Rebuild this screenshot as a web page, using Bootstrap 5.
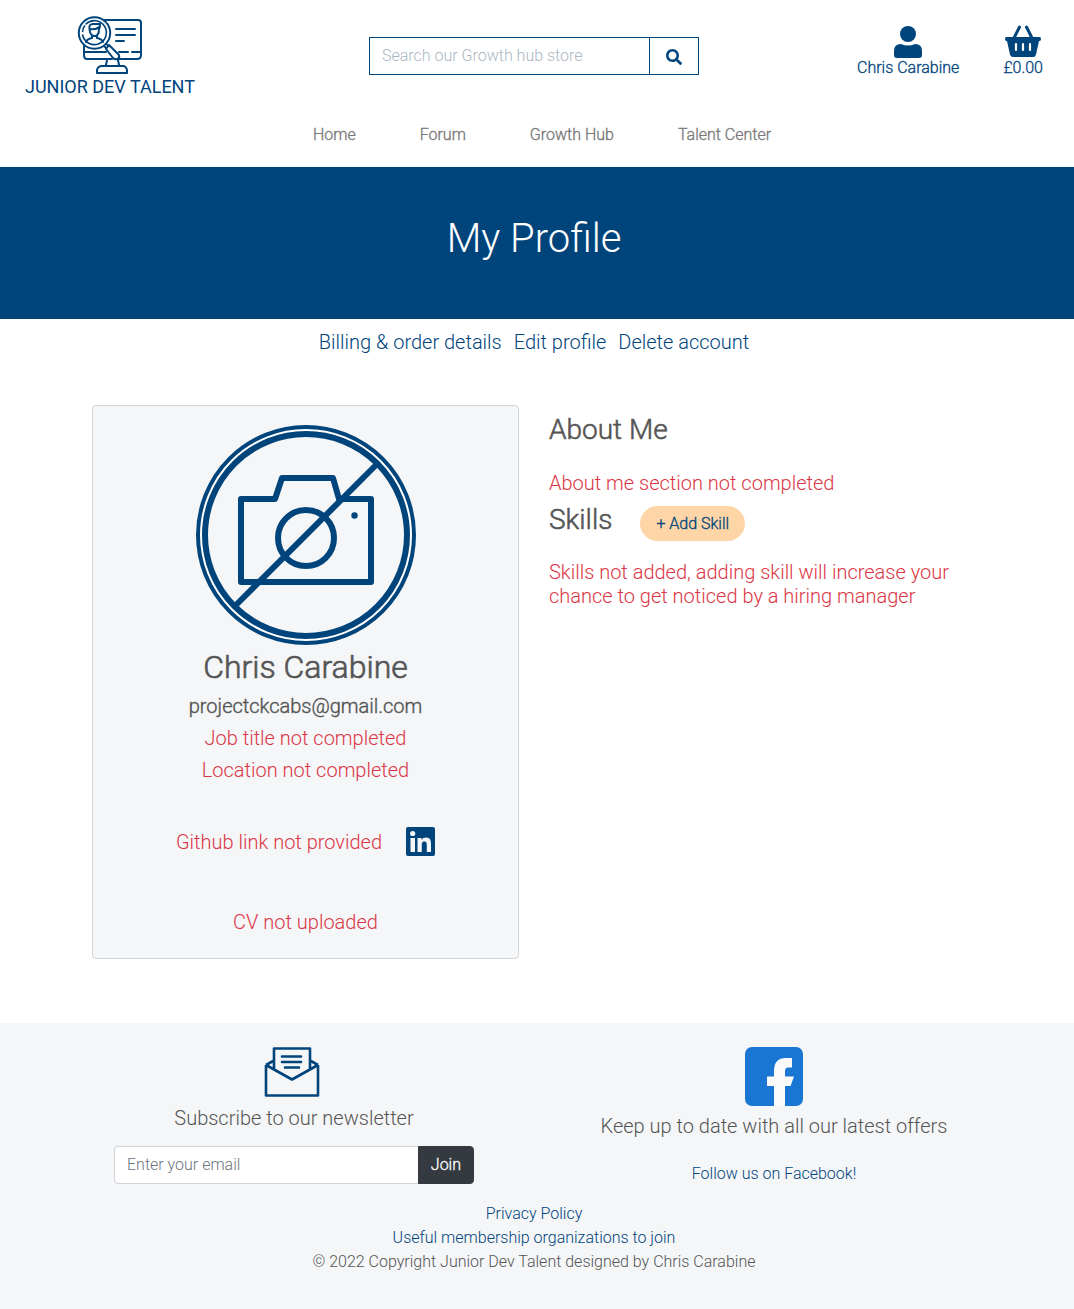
<!DOCTYPE html>
<html lang="en">
<head>
<meta charset="utf-8">
<meta name="viewport" content="width=device-width, initial-scale=1">
<title>My Profile | Junior Dev Talent</title>
<link href="https://cdn.jsdelivr.net/npm/bootstrap@5.3.0/dist/css/bootstrap.min.css" rel="stylesheet">
<style>
:root { --brand: #00447c; --soft: #f4f6f8; --ink: #555; --warn: #dc3545; }
body { font-family: Roboto, "Liberation Sans", sans-serif; font-weight: 300; color: var(--ink); }
a { color: var(--brand); text-decoration: none; }
h1, h2, h3, h4, h5 { font-weight: 300; }
.thick { -webkit-text-stroke: .02em currentColor; font-weight: 300; }
.page-edge { padding-right: 6px; }
.brand-text { font-size: 18px; line-height: 24px; padding-left: 25px; font-weight: 400; }
.site-head { padding-top: 15px; }
.search-box { max-width: 330px; margin-top: 22px; }
.search-box .form-control, .search-box .btn { border: 1px solid var(--brand); border-radius: 0; font-weight: 300; color: var(--brand); }
.search-box .btn { width: 50px; padding: 0; }
.search-box .form-control::placeholder { color: #aab7c4; }
.tool-link { line-height: 20px; }
.tool-link svg { display: block; margin: 0 auto; }
.tools { gap: 44px; padding: 10px 25px 0 0; }
.main-nav { gap: 64px; padding: 24px 0 20px 16px; }
.main-nav a { color: #777; }
.banner { background: var(--brand); color: #fff; }
.banner h1 { font-size: 40px; }
.sub-links { font-size: 20px; line-height: 24px; gap: 12px; padding-top: 11px; }
.profile-wrap { max-width: 914px; margin-top: 51px; }
.profile-wrap .row { --bs-gutter-x: 30px; }
.profile-card { background: var(--soft); padding: 19px 20px 24px; border-color: #d3d6d9; border-radius: 4px; }
.profile-card h2 { font-size: 32px; line-height: 38px; margin: 3px 0 8px; }
.note { font-size: 20px; line-height: 24px; margin-bottom: 8px; color: var(--warn); }
.mail-text { color: var(--ink); }
.section-title { font-size: 28px; line-height: 34px; margin: 0; }
.socials { gap: 24px; margin: 37px 0 54px; }
.skills-note { margin-top: 19px; }
.add-skill { background: #fed5a6; color: var(--brand); border-radius: 18px; padding: 6px 16px 5px; border: 0; margin: 3px 0 0 28px; }
.add-skill:hover { background: #fdc68a; color: var(--brand); }
.site-foot { background: var(--soft); margin-top: 64px; padding-top: 24px; padding-bottom: 36px; }
.foot-wrap { max-width: 960px; }
.foot-title { font-size: 20px; line-height: 24px; }
.join-box { max-width: 360px; }
.join-box .form-control { border-color: #ced4da; border-radius: 4px; font-weight: 300; }
.join-box .form-control::placeholder { color: #6c757d; }
.join-box .btn { background: #343a40; border-color: #343a40; border-radius: 4px; color: #fff; }
</style>
</head>
<body>
<header class="site-head page-edge">
  <div class="d-flex align-items-start">
    <div class="flex-fill w-25 d-flex">
      <a href="#" class="brand-text text-center">
        <svg class="d-block mx-auto" width="66" height="60" viewBox="0 0 66 60" fill="none" stroke="#00447c" stroke-width="2" stroke-linecap="round" stroke-linejoin="round">
          <path d="M27 5H61Q64 5 64 8V40Q64 44 60 44H41M35 44H10Q7 44 7 40V31M8 37H29M42 37H51M55 37H63M39 14H58M39 20H58M39 26H47M30 45L29 50M41 45L42 50M20 58V55Q21 51 25 51H46Q49 51 50 55V58Z"/>
          <circle cx="17.500" cy="18" r="15.700"/>
          <path stroke-width="1.600" d="M9 9A12 12 0 1 1 5.600 20M5.600 16.500Q6 13 7.500 11"/>
          <path d="M12.500 14Q11.500 9 16 9H23Q23 13 22 14Q22 21 17.500 21Q13 21 12.500 14ZM12.500 14Q19 15 22 12M15 21V23Q10 24 9 27M20 21V23Q25 24 26 27"/>
          <path d="M29 34L32 30L42 40Q43 43 40 44Q38 45 36 43ZM29 29L32 31M27 31L29 33"/>
        </svg>
        JUNIOR DEV TALENT
      </a>
    </div>
    <form class="search-box input-group flex-nowrap" role="search">
      <input type="search" class="form-control" placeholder="Search our Growth hub store" aria-label="Search our Growth hub store">
      <button type="button" class="btn" aria-label="Search">
        <svg width="16" height="16" viewBox="0 0 512 512" fill="currentColor"><path d="M505 443 405 343c-4-4-11-7-17-7h-16c27-35 44-79 44-128C416 93 323 0 208 0S0 93 0 208s93 208 208 208c49 0 93-17 128-44v16c0 6 3 13 7 17l100 100c9 9 24 9 34 0l28-28c9-10 9-25 0-34zM208 336c-71 0-128-57-128-128S137 80 208 80s128 57 128 128-57 128-128 128z"/></svg>
      </button>
    </form>
    <div class="tools flex-fill w-25 d-flex justify-content-end">
      <a href="#" class="tool-link thick text-center">
        <svg width="28" height="33" viewBox="0 0 28 33" fill="currentColor"><circle cx="14" cy="9" r="8"/><path d="M7 19Q14 22 21 19Q28 19 28 26V30Q28 33 25 33H3Q0 33 0 30V26Q0 19 7 19Z"/></svg>
        Chris Carabine
      </a>
      <a href="#" class="tool-link thick text-center">
        <svg width="36" height="33" viewBox="0 0 36 33" fill="currentColor"><path d="M1.500 12H34.500Q36 12 36 14T34.500 16H34L31 29.500Q30.500 32 28 32H8Q5.500 32 5 29.500L2 16H1.500Q0 16 0 14T1.500 12Z"/><path d="M9 13 14.500 2M27 13 21.500 2" stroke="currentColor" stroke-width="3" stroke-linecap="round"/><path d="M11 19V25M18 19V25M25 19V25" stroke="#fff" stroke-width="2.200" stroke-linecap="round"/></svg>
        £0.00
      </a>
    </div>
  </div>
  <nav class="main-nav thick d-flex justify-content-center" aria-label="Main">
    <a href="#">Home</a><a href="#">Forum</a><a href="#">Growth Hub</a><a href="#">Talent Center</a>
  </nav>
</header>
<section class="banner page-edge py-5 text-center"><h1>My Profile</h1></section>
<main class="page-edge">
  <div class="sub-links d-flex justify-content-center">
    <a href="#">Billing &amp; order details</a><a href="#">Edit profile</a><a href="#">Delete account</a>
  </div>
  <div class="profile-wrap mx-auto">
    <div class="row mx-0">
      <div class="col-md-6">
        <div class="card profile-card text-center">
          <svg class="mx-auto" width="220" height="220" viewBox="0 0 220 220" fill="none" stroke="#00447c" stroke-width="6" stroke-linejoin="round" role="img" aria-label="No profile photo">
            <circle cx="110" cy="110" r="106" stroke="#fff" stroke-width="4"/>
            <circle cx="110" cy="110" r="108" stroke-width="4"/><circle cx="110" cy="110" r="101"/>
            <path d="M45 74H79L86 53H137L143 74H175V157H45Z"/><circle cx="110" cy="113" r="28"/>
            <path d="M39 181 181 39"/><circle cx="158.500" cy="90.500" r="3.200" fill="#00447c" stroke="none"/>
          </svg>
          <h2 class="thick">Chris Carabine</h2>
          <p class="note mail-text thick">projectckcabs@gmail.com</p>
          <p class="note">Job title not completed</p>
          <p class="note">Location not completed</p>
          <div class="socials d-flex justify-content-center align-items-center">
            <p class="note mb-0">Github link not provided</p>
            <a href="#" aria-label="LinkedIn">
              <svg class="d-block" width="29" height="29" viewBox="0 0 29 29"><rect width="29" height="29" rx="2" fill="#00447c"/><g fill="#f4f6f8"><circle cx="6.700" cy="6.500" r="2.600"/><path d="M4.500 11H9V25H4.500ZM11.500 11H15.500V13Q17 10.600 20 10.600C24.500 10.600 25 14 25 17.300V25H20.800V18.200C20.800 16.500 20.700 14.400 18.300 14.400S15.800 16.300 15.800 18V25H11.500Z"/></g></svg>
            </a>
          </div>
          <p class="note mb-0">CV not uploaded</p>
        </div>
      </div>
      <div class="col-md-6 pt-2">
        <h3 class="section-title thick">About Me</h3>
        <p class="note mt-4">About me section not completed</p>
        <div class="d-flex align-items-start">
          <h3 class="section-title thick">Skills</h3>
          <button type="button" class="btn add-skill thick">+ Add Skill</button>
        </div>
        <p class="note skills-note">Skills not added, adding skill will increase your chance to get noticed by a hiring manager</p>
      </div>
    </div>
  </div>
</main>
<footer class="site-foot page-edge text-center">
  <div class="foot-wrap mx-auto">
    <div class="row g-0">
      <div class="col-md-6">
        <div class="pe-1">
          <svg class="d-block mx-auto" width="56" height="51" viewBox="0 0 56 51" fill="none" stroke="#00447c" stroke-width="2.600" stroke-linejoin="round"><path d="M2 18V48.500H54V18M2 18 28 32.500 54 18M2 18 10 13.500M54 18 46 13.500M10 22V1.500H46V22"/><path d="M18 9.500H37M18 15H37M21 20.500H35" stroke-linecap="round"/></svg>
        </div>
        <label class="foot-title d-block mt-2 mb-3" for="news-email">Subscribe to our newsletter</label>
        <form class="join-box input-group mx-auto">
          <input id="news-email" type="email" class="form-control" placeholder="Enter your email">
          <button type="button" class="btn thick">Join</button>
        </form>
      </div>
      <div class="col-md-6">
        <svg class="d-block mx-auto" width="58" height="59" viewBox="0 0 58 59"><rect width="58" height="59" rx="7" fill="#1976d2"/><path fill="#fafafa" d="M29 59V39H22V29.500H29V24Q29 11 41 11H47V20.500H43Q40 20.500 40 24V29.500H49L45.500 39H40V59Z"/></svg>
        <p class="foot-title mt-2 mb-4">Keep up to date with all our latest offers</p>
        <a href="#">Follow us on Facebook!</a>
      </div>
    </div>
    <div class="mt-3">
      <a class="d-block" href="#">Privacy Policy</a>
      <a class="d-block" href="#">Useful membership organizations to join</a>
      <span class="d-block">© 2022 Copyright Junior Dev Talent designed by Chris Carabine</span>
    </div>
  </div>
</footer>
<script src="https://cdn.jsdelivr.net/npm/bootstrap@5.3.0/dist/js/bootstrap.bundle.min.js"></script>
</body>
</html>
